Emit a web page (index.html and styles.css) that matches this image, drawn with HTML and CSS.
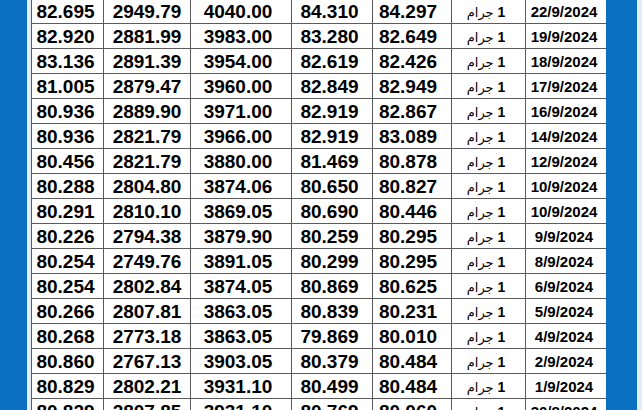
FILE: index.html
```html
<!DOCTYPE html>
<html lang="ar">
<head>
<meta charset="utf-8">
<link rel="stylesheet" href="styles.css">
</head>
<body>
<div class="frame">
  <div class="side-left"></div>
  <div class="gap-left"></div>
  <div class="sheet">
    <table class="prices">
      <colgroup>
        <col class="c1"><col class="c2"><col class="c3"><col class="c4"><col class="c5"><col class="c6"><col class="c7">
      </colgroup>
      <tbody>
        <tr><td>82.695</td><td>2949.79</td><td>4040.00</td><td>84.310</td><td>84.297</td><td dir="rtl">1 <span class="unit">جرام</span></td><td>22/9/2024</td></tr>
        <tr><td>82.920</td><td>2881.99</td><td>3983.00</td><td>83.280</td><td>82.649</td><td dir="rtl">1 <span class="unit">جرام</span></td><td>19/9/2024</td></tr>
        <tr><td>83.136</td><td>2891.39</td><td>3954.00</td><td>82.619</td><td>82.426</td><td dir="rtl">1 <span class="unit">جرام</span></td><td>18/9/2024</td></tr>
        <tr><td>81.005</td><td>2879.47</td><td>3960.00</td><td>82.849</td><td>82.949</td><td dir="rtl">1 <span class="unit">جرام</span></td><td>17/9/2024</td></tr>
        <tr><td>80.936</td><td>2889.90</td><td>3971.00</td><td>82.919</td><td>82.867</td><td dir="rtl">1 <span class="unit">جرام</span></td><td>16/9/2024</td></tr>
        <tr><td>80.936</td><td>2821.79</td><td>3966.00</td><td>82.919</td><td>83.089</td><td dir="rtl">1 <span class="unit">جرام</span></td><td>14/9/2024</td></tr>
        <tr><td>80.456</td><td>2821.79</td><td>3880.00</td><td>81.469</td><td>80.878</td><td dir="rtl">1 <span class="unit">جرام</span></td><td>12/9/2024</td></tr>
        <tr><td>80.288</td><td>2804.80</td><td>3874.06</td><td>80.650</td><td>80.827</td><td dir="rtl">1 <span class="unit">جرام</span></td><td>10/9/2024</td></tr>
        <tr><td>80.291</td><td>2810.10</td><td>3869.05</td><td>80.690</td><td>80.446</td><td dir="rtl">1 <span class="unit">جرام</span></td><td>10/9/2024</td></tr>
        <tr><td>80.226</td><td>2794.38</td><td>3879.90</td><td>80.259</td><td>80.295</td><td dir="rtl">1 <span class="unit">جرام</span></td><td>9/9/2024</td></tr>
        <tr><td>80.254</td><td>2749.76</td><td>3891.05</td><td>80.299</td><td>80.295</td><td dir="rtl">1 <span class="unit">جرام</span></td><td>8/9/2024</td></tr>
        <tr><td>80.254</td><td>2802.84</td><td>3874.05</td><td>80.869</td><td>80.625</td><td dir="rtl">1 <span class="unit">جرام</span></td><td>6/9/2024</td></tr>
        <tr><td>80.266</td><td>2807.81</td><td>3863.05</td><td>80.839</td><td>80.231</td><td dir="rtl">1 <span class="unit">جرام</span></td><td>5/9/2024</td></tr>
        <tr><td>80.268</td><td>2773.18</td><td>3863.05</td><td>79.869</td><td>80.010</td><td dir="rtl">1 <span class="unit">جرام</span></td><td>4/9/2024</td></tr>
        <tr><td>80.860</td><td>2767.13</td><td>3903.05</td><td>80.379</td><td>80.484</td><td dir="rtl">1 <span class="unit">جرام</span></td><td>2/9/2024</td></tr>
        <tr><td>80.829</td><td>2802.21</td><td>3931.10</td><td>80.499</td><td>80.484</td><td dir="rtl">1 <span class="unit">جرام</span></td><td>1/9/2024</td></tr>
        <tr><td>80.829</td><td>2807.85</td><td>3931.10</td><td>80.769</td><td>80.060</td><td dir="rtl">1 <span class="unit">جرام</span></td><td>30/8/2024</td></tr>
      </tbody>
    </table>
  </div>
  <div class="side-right"></div>
  <div class="gap-right"></div>
</div>
</body>
</html>
```

FILE: styles.css
```css
html, body {
  margin: 0;
  padding: 0;
  background: #e4ecf5;
  overflow: hidden;
}

.frame {
  display: flex;
  width: 642px;
  height: 410px;
  overflow: hidden;
  background: #e4ecf5;
}

.side-left {
  width: 27px;
  flex: none;
  background: #0b6fc1;
}

.gap-left {
  width: 4px;
  flex: none;
}

.sheet {
  width: 575px;
  flex: none;
  margin-top: -2px;
  background: #ffffff;
}

.side-right {
  width: 31px;
  flex: none;
  background: #0b6fc1;
}

.gap-right {
  width: 5px;
  flex: none;
}

.prices {
  width: 575px;
  border-collapse: collapse;
  table-layout: fixed;
  font-family: "Liberation Sans", Arial, "DejaVu Sans", sans-serif;
  font-weight: bold;
  color: #000000;
  background: #ffffff;
}

.c1 { width: 72px; }
.c2 { width: 87px; }
.c3 { width: 101px; }
.c4 { width: 81px; }
.c5 { width: 79px; }
.c6 { width: 74px; }
.c7 { width: 81px; }

.prices td {
  border: 1px solid #5b5b5b;
  height: 22px;
  padding: 2px 0 0 0;
  text-align: center;
  font-size: 19px;
  line-height: 22px;
  white-space: nowrap;
  overflow: hidden;
  vertical-align: middle;
}

.prices td:nth-child(1) { padding-right: 4px; }
.prices td:nth-child(3) { padding-right: 6px; }
.prices td:nth-child(4) { padding-right: 5px; }
.prices td:nth-child(5) { padding-right: 8px; }

.prices td:nth-child(6) {
  font-size: 14px;
  font-family: "Liberation Sans", "DejaVu Sans", sans-serif;
  padding-right: 5px;
}

.unit {
  font-family: "DejaVu Sans", sans-serif;
  font-weight: normal;
  font-size: 13px;
  line-height: 1;
}

.prices td:nth-child(7) {
  font-size: 15px;
  padding-right: 4px;
}
```
